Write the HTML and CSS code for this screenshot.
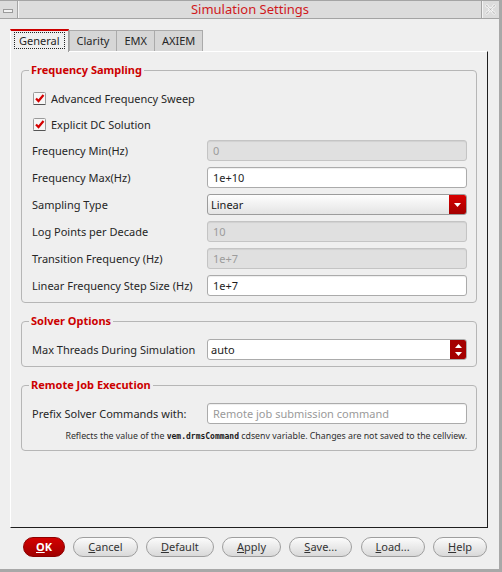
FILE: index.html
```html
<!DOCTYPE html>
<html>
<head>
<meta charset="utf-8">
<title>Simulation Settings</title>
<link rel="stylesheet" href="styles.css">
</head>
<body>
<div class="window">
  <div class="titlebar">
    <div class="tb-menu"><span class="tb-menu-icon"></span></div>
    <div class="tb-title">Simulation Settings</div>
    <div class="tb-close">
      <svg width="13" height="13" viewBox="0 0 13 13"><path d="M2 2 L11 11 M11 2 L2 11" stroke="#f8f8f8" stroke-width="3" stroke-dasharray="1 1" fill="none"/><path d="M2 2 L11 11 M11 2 L2 11" stroke="#b0b0b0" stroke-width="1" stroke-dasharray="1 1" fill="none"/></svg>
    </div>
  </div>
  <div class="main">
    <div class="tabs">
      <div class="tab active"><span class="focus">General</span></div>
      <div class="tab">Clarity</div>
      <div class="tab">EMX</div>
      <div class="tab">AXIEM</div>
    </div>
    <div class="panel">
      <fieldset class="group">
        <legend>Frequency Sampling</legend>
        <div class="grid">
          <div class="check"><svg class="cb" width="13" height="13" viewBox="0 0 13 13"><rect x="0.5" y="0.5" width="12" height="12" rx="1" fill="#f6f6f6" stroke="#9a9a9a"/><path d="M0.5 12.5 H12.5" stroke="#555"/><path d="M3 6.5 L5.5 9 L10.5 3" stroke="#d40000" stroke-width="2.2" fill="none"/></svg><span>Advanced Frequency Sweep</span></div>
          <div class="check"><svg class="cb" width="13" height="13" viewBox="0 0 13 13"><rect x="0.5" y="0.5" width="12" height="12" rx="1" fill="#f6f6f6" stroke="#9a9a9a"/><path d="M0.5 12.5 H12.5" stroke="#555"/><path d="M3 6.5 L5.5 9 L10.5 3" stroke="#d40000" stroke-width="2.2" fill="none"/></svg><span>Explicit DC Solution</span></div>
          <div class="lbl">Frequency Min(Hz)</div>
          <div class="field disabled">0</div>
          <div class="lbl">Frequency Max(Hz)</div>
          <div class="field">1e+10</div>
          <div class="lbl">Sampling Type</div>
          <div class="combo"><span class="combo-text">Linear</span><span class="combo-btn"><svg width="7" height="4" viewBox="0 0 7 4"><path d="M0 0 H7 L3.5 4 Z" fill="#fff"/></svg></span></div>
          <div class="lbl">Log Points per Decade</div>
          <div class="field disabled">10</div>
          <div class="lbl">Transition Frequency (Hz)</div>
          <div class="field disabled">1e+7</div>
          <div class="lbl">Linear Frequency Step Size (Hz)</div>
          <div class="field">1e+7</div>
        </div>
      </fieldset>
      <fieldset class="group">
        <legend>Solver Options</legend>
        <div class="grid">
          <div class="lbl">Max Threads During Simulation</div>
          <div class="spin"><span class="spin-text">auto</span><span class="spin-btn"><svg width="7" height="4" viewBox="0 0 7 4"><path d="M0 4 H7 L3.5 0 Z" fill="#fff"/></svg><svg width="7" height="4" viewBox="0 0 7 4"><path d="M0 0 H7 L3.5 4 Z" fill="#fff"/></svg></span></div>
        </div>
      </fieldset>
      <fieldset class="group">
        <legend>Remote Job Execution</legend>
        <div class="grid">
          <div class="lbl">Prefix Solver Commands with:</div>
          <div class="field placeholder">Remote job submission command</div>
          <div class="note">Reflects the value of the <code>vem.drmsCommand</code> cdsenv variable. Changes are not saved to the cellview.</div>
        </div>
      </fieldset>
    </div>
    <div class="buttons">
      <div class="btn primary"><u>O</u>K</div>
      <div class="btn"><u>C</u>ancel</div>
      <div class="btn"><u>D</u>efault</div>
      <div class="btn"><u>A</u>pply</div>
      <div class="btn"><u>S</u>ave...</div>
      <div class="btn"><u>L</u>oad...</div>
      <div class="btn"><u>H</u>elp</div>
    </div>
  </div>
</div>
</body>
</html>
```
FILE: styles.css
```css
* { box-sizing: border-box; }
html, body { margin: 0; padding: 0; }
body {
  background: #efefef;
  font-family: "Noto Sans", "Open Sans", sans-serif;
  font-size: 11px;
  color: #262626;
}
.window {
  width: 502px;
  height: 572px;
  border-right: 3px solid #a8a8a8;
  border-bottom: 3px solid #a8a8a8;
  display: flex;
  flex-direction: column;
  background: #efefef;
}
.titlebar {
  display: flex;
  height: 19px;
  border-top: 1px solid #a4a4a4;
  border-bottom: 1px solid #a4a4a4;
  background: #dcdcdc;
}
.tb-menu {
  width: 18px;
  border-right: 1px solid #a4a4a4;
  display: flex;
  align-items: center;
  padding-left: 3px;
  padding-top: 3px;
}
.tb-menu-icon {
  width: 10px;
  height: 4px;
  border: 1px solid #9a9a9a;
  background: #f2f2f2;
}
.tb-title {
  flex: 1;
  text-align: center;
  color: #d0191c;
  font-size: 13px;
  line-height: 17px;
  border-left: 1px solid #f4f4f4;
}
.tb-close {
  width: 18px;
  border-left: 1px solid #a4a4a4;
  display: flex;
  align-items: center;
  justify-content: center;
  box-shadow: inset 1px 0 #f4f4f4;
}
.main {
  flex: 1;
  display: flex;
  flex-direction: column;
  padding: 11px 11px 12px 10px;
}
.tabs {
  display: flex;
  align-items: flex-end;
  height: 22px;
  margin-bottom: -1px;
}
.tab {
  height: 22px;
  padding: 0 7px;
  line-height: 20px;
  background: #d6d6d6;
  border: 1px solid #aaaaaa;
  border-bottom: none;
  margin-right: -1px;
  color: #262626;
}
.tab.active {
  height: 23px;
  position: relative;
  z-index: 1;
  background: #efefef;
  border-top: 2px solid #cc0000;
  border-left: 1px solid #ffffff;
  border-right: 1px solid #a0a0a0;
  padding: 1px 3px 0 3px;
  margin-right: 0;
}
.focus {
  display: block;
  border: 1px dotted #222;
  padding: 0 4px;
  line-height: 15px;
}
.panel {
  flex: 1;
  border: 1px solid;
  border-color: #ffffff #1e1e1e #1e1e1e #ffffff;
  padding: 10px 10px 0 10px;
  display: flex;
  flex-direction: column;
  gap: 10px;
}
.group {
  margin: 0;
  min-width: 0;
  border: 1px solid #b6b6b6;
  border-radius: 4px;
  padding: 10px 9px 6px 10px;
}
.group legend {
  padding: 0 2px;
  margin-left: -3px;
  font-weight: 700;
  color: #cc0000;
  font-size: 11px;
  line-height: 16px;
}
.grid {
  display: grid;
  grid-template-columns: 175px 1fr;
  row-gap: 6px;
  align-items: center;
}
.check {
  grid-column: 1 / -1;
  height: 20px;
  display: flex;
  align-items: center;
  gap: 5px;
  padding-left: 1px;
}
.cb { flex: none; }
.lbl { line-height: 21px; white-space: nowrap; }
.field {
  height: 21px;
  border: 1px solid #ababab;
  border-radius: 3px;
  padding: 0 5px;
  line-height: 19px;
  background: #ffffff;
  box-shadow: inset 0 1px 1px rgba(0,0,0,0.07);
  color: #1e1e1e;
}
.field.disabled {
  background: #e0e0e0;
  color: #9c9c9c;
  border-color: #c4c4c4;
}
.field.placeholder { color: #9a9a9a; }
.combo {
  height: 21px;
  display: flex;
  border: 1px solid #9c9c9c;
  border-radius: 3px;
  background: linear-gradient(#fefefe, #e4e4e4);
  overflow: hidden;
}
.combo-text { flex: 1; padding-left: 3px; line-height: 19px; color: #1a1a1a; }
.combo-btn {
  width: 17px;
  background: linear-gradient(#d80000, #a40000);
  display: flex;
  align-items: center;
  justify-content: center;
}
.spin {
  height: 21px;
  display: flex;
  border: 1px solid #ababab;
  border-radius: 3px;
  background: #ffffff;
  overflow: hidden;
}
.spin-text { flex: 1; padding-left: 3px; line-height: 19px; color: #1a1a1a; }
.spin-btn {
  width: 16px;
  background: #a50000;
  display: flex;
  flex-direction: column;
  align-items: center;
  justify-content: center;
  gap: 4px;
}
.spin-btn svg { display: block; }
.note {
  grid-column: 1 / -1;
  text-align: right;
  font-size: 8.8px;
  line-height: 13px;
  color: #2e2e2e;
  padding-bottom: 1px;
}
.note code {
  font-family: "DejaVu Sans Mono", monospace;
  font-size: 8px;
  font-weight: 700;
  color: #1a1a1a;
}
.buttons {
  display: flex;
  justify-content: space-between;
  margin-top: 9px;
  padding: 0 1px 0 13px;
}
.btn {
  height: 20px;
  border: 1px solid #9e9e9e;
  border-radius: 10px;
  background: linear-gradient(#fbfbfb, #d9d9d9);
  padding: 0 14px;
  line-height: 18px;
  color: #333;
  white-space: nowrap;
}
.btn.primary {
  background: linear-gradient(#d40000, #a00000);
  border-color: #8c0000;
  color: #ffffff;
  font-weight: 700;
  padding: 0 12px;
}
```
